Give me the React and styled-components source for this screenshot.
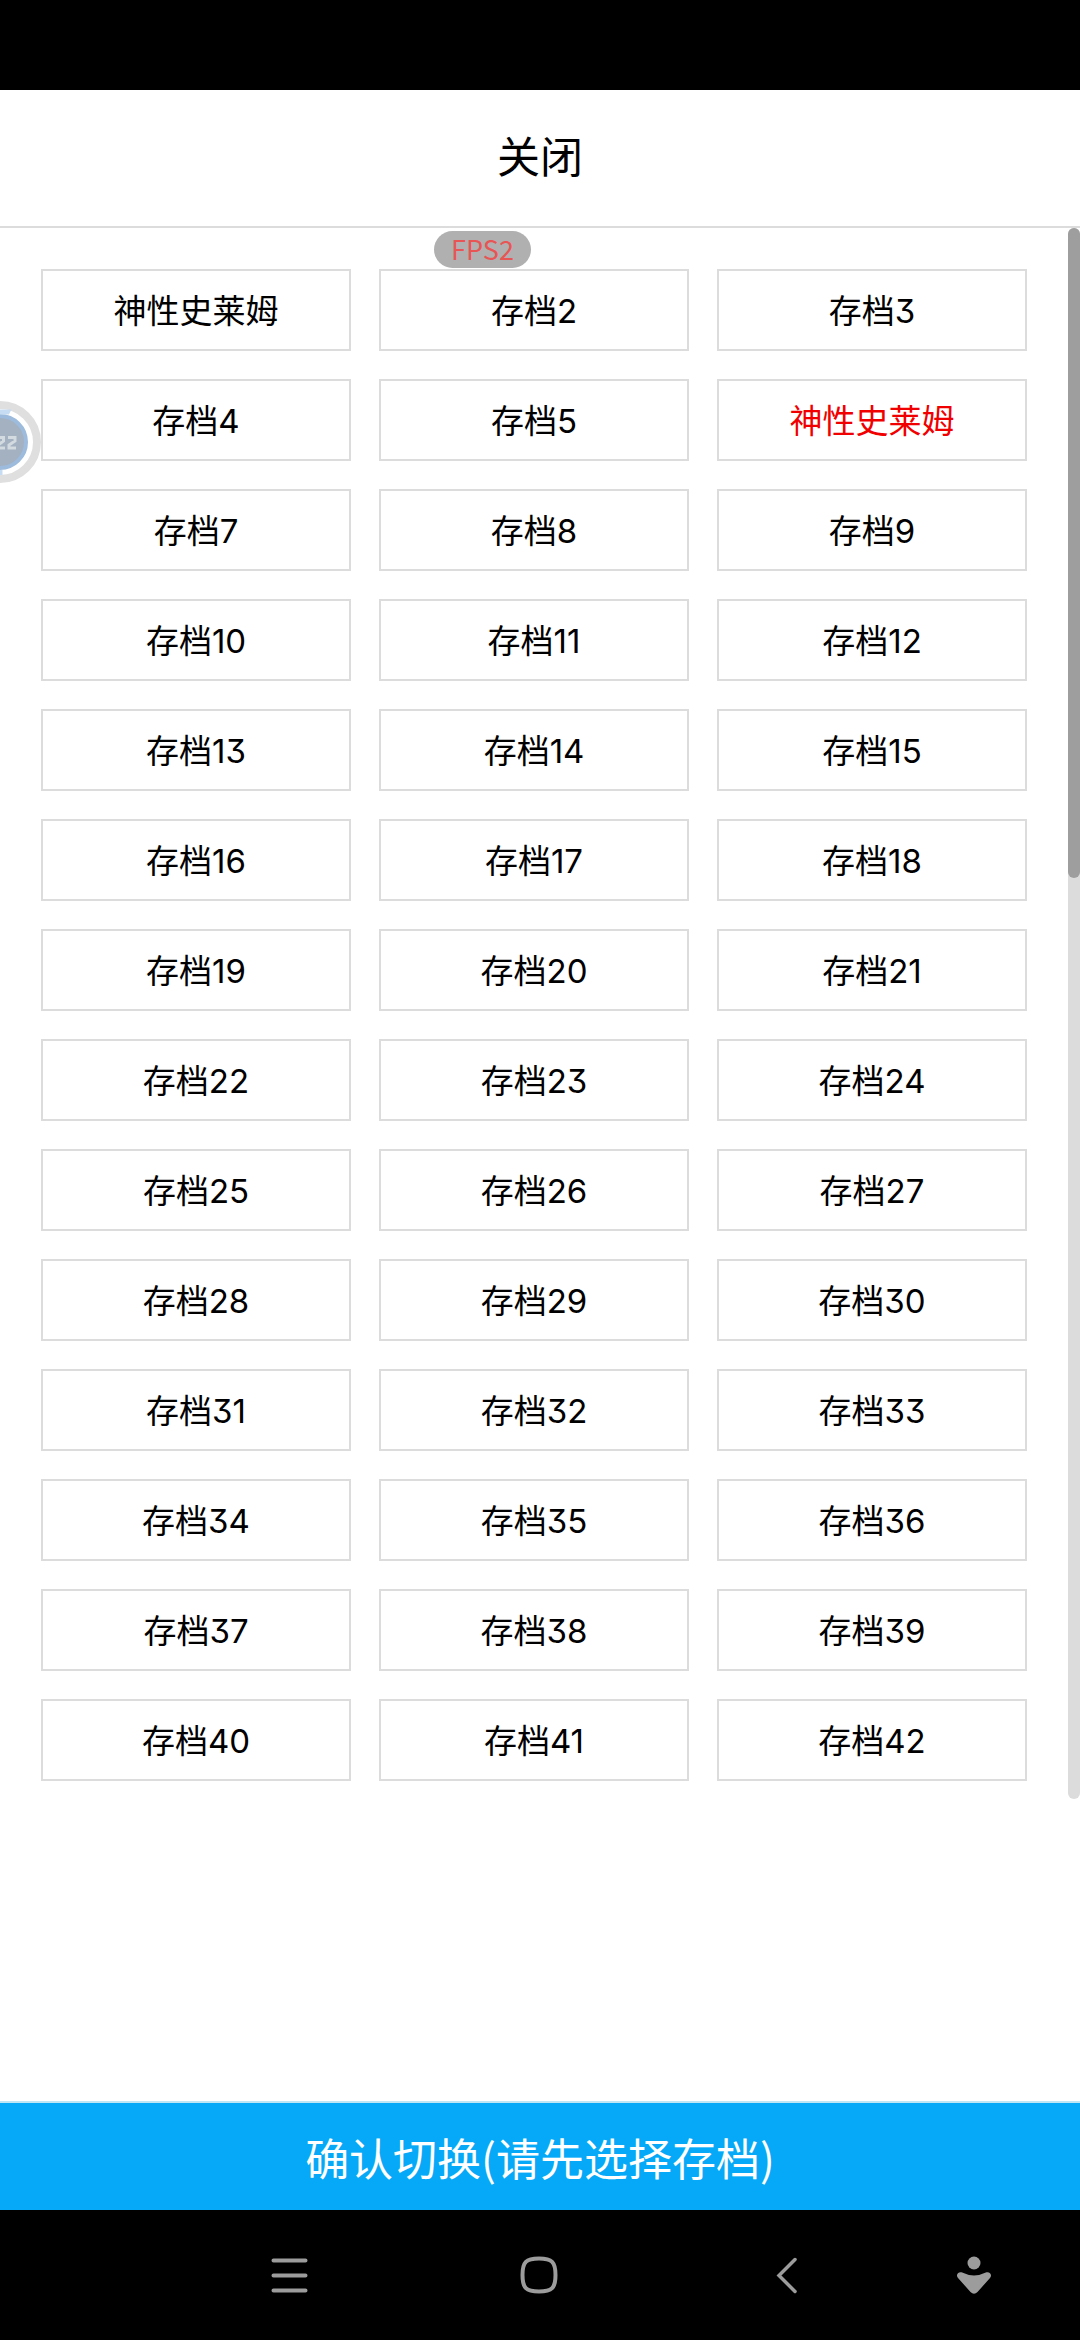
import React, { useState } from 'react';
import styled, { createGlobalStyle } from 'styled-components';

const GlobalStyle = createGlobalStyle`
  * {
    box-sizing: border-box;
  }

  body {
    margin: 0;
    background: #fff;
    font-family: Inter, 'Noto Sans CJK SC', sans-serif;
    font-weight: 380;
    font-feature-settings: 'cv09';
  }

  button {
    margin: 0;
    padding: 0;
    border: none;
    background: none;
    color: inherit;
    font: inherit;
    font-feature-settings: inherit;
    cursor: pointer;
  }
`;

const Screen = styled.div`
  position: relative;
  display: flex;
  flex-direction: column;
  min-height: 100vh;
  background: #fff;
  color: #000;
`;

const StatusBar = styled.div`
  height: 90px;
  background: #000;
`;

const CloseButton = styled.button`
  height: 138px;
  padding-bottom: 2px;
  border-bottom: 2px solid #dcdcdc;
  font-size: 43px;
  line-height: 60px;
`;

const ListArea = styled.main`
  display: flex;
  align-items: stretch;
`;

const SlotGrid = styled.div`
  flex: 1;
  display: grid;
  grid-template-columns: repeat(3, 1fr);
  gap: 28px;
  padding: 41px 41px 18px;
`;

const Slot = styled.button`
  height: 82px;
  padding-top: 2px;
  border: 2px solid #dcdcdc;
  font-size: 33px;
  line-height: 48px;
  color: ${({ $active }) => ($active ? '#f00000' : '#000')};
`;

const ScrollTrack = styled.div`
  width: 12px;
  border-radius: 6px;
  background: #dcdcdc;
`;

const ScrollThumb = styled.div`
  height: 650px;
  border-radius: 6px;
  background: #9e9e9e;
`;

const ConfirmButton = styled.button`
  height: 109px;
  margin-top: auto;
  border-top: 2px solid #bfe6f5;
  background: #05a9f7;
  color: #fff;
  font-family: 'Noto Sans CJK SC', sans-serif;
  font-size: 44px;
  font-weight: 400;
  line-height: 60px;
`;

const NavBar = styled.nav`
  display: grid;
  grid-template-columns: 2fr 2fr 2fr 1fr;
  height: 130px;
  padding: 0 44px 0 166px;
  background: #000;
  color: #9c9c9c;
`;

const NavButton = styled.button`
  display: flex;
  align-items: center;
  justify-content: center;
`;

const FpsBadge = styled.div`
  position: absolute;
  top: 231px;
  left: 434px;
  width: 97px;
  height: 37px;
  border-radius: 19px;
  background: #b0b0b0;
  color: #e85555;
  font-family: 'Noto Sans CJK SC', sans-serif;
  font-size: 27px;
  line-height: 36px;
  text-align: center;
`;

const FloatingBall = styled.button`
  position: absolute;
  top: 401px;
  left: 0;
  height: 82px;

  svg {
    display: block;
  }
`;

const SLOT_COUNT = 42;
const slotNames = { 1: '神性史莱姆', 6: '神性史莱姆' };

const slots = Array.from({ length: SLOT_COUNT }, (_, i) => ({
  id: i + 1,
  name: slotNames[i + 1] || `存档${i + 1}`,
}));

const MenuIcon = () => (
  <svg width="40" height="40" fill="none" stroke="currentColor" strokeWidth="4" strokeLinecap="round">
    <path d="M3.500 5.500H35.500M3.500 20.500H35.500M3.500 35.500H35.500" />
  </svg>
);

const HomeIcon = () => (
  <svg width="40" height="40" fill="none" stroke="currentColor" strokeWidth="4">
    <path d="M20 3.500C33 3.500 36.500 7 36.500 20S33 36.500 20 36.500 3.500 33 3.500 20 7 3.500 20 3.500Z" />
  </svg>
);

const BackIcon = () => (
  <svg width="40" height="40" fill="none" stroke="currentColor" strokeWidth="3.500" strokeLinecap="round">
    <path d="M28 4.500L12 20.500L28 36.500" />
  </svg>
);

const PersonIcon = () => (
  <svg width="40" height="40" fill="currentColor">
    <circle cx="20" cy="8" r="6.500" />
    <path d="M7.500 17.300Q20 23.500 32.500 17.300C36 16.500 38.500 20 36 23L23.500 37Q20 40.500 16.500 37L4 23C1.500 20 4 16.500 7.500 17.300Z" />
  </svg>
);

const BallIcon = () => (
  <svg width="42" height="82" viewBox="0 0 42 82">
    <circle cx="0" cy="41" r="37" fill="#fff" stroke="#dfdfdf" strokeWidth="8" />
    <circle cx="0" cy="41" r="26" fill="#a3b1c1" stroke="#9dbbdc" strokeWidth="4" />
    <path d="M0 10H9L8 12H0" fill="none" stroke="#c5dcf2" strokeWidth="3" />
    <path d="M1 69V74" stroke="#c5dcf2" strokeWidth="3" />
    <path d="M-3 36.500H3.500V40L-2 44V47H5M8 36.500H15V40L9 44V47H16" fill="none" stroke="#d3dae0" strokeWidth="3" />
  </svg>
);

const App = () => {
  const [selected, setSelected] = useState(6);

  return (
    <>
      <GlobalStyle />
      <Screen>
        <StatusBar />
        <CloseButton type="button">关闭</CloseButton>
        <ListArea>
          <SlotGrid>
            {slots.map(({ id, name }) => (
              <Slot key={id} type="button" $active={id === selected} onClick={() => setSelected(id)}>
                {name}
              </Slot>
            ))}
          </SlotGrid>
          <ScrollTrack>
            <ScrollThumb />
          </ScrollTrack>
        </ListArea>
        <ConfirmButton type="button">确认切换(请先选择存档)</ConfirmButton>
        <NavBar>
          <NavButton type="button" aria-label="菜单"><MenuIcon /></NavButton>
          <NavButton type="button" aria-label="主页"><HomeIcon /></NavButton>
          <NavButton type="button" aria-label="返回"><BackIcon /></NavButton>
          <NavButton type="button" aria-label="助手"><PersonIcon /></NavButton>
        </NavBar>
        <FpsBadge>FPS2</FpsBadge>
        <FloatingBall type="button" aria-label="悬浮球"><BallIcon /></FloatingBall>
      </Screen>
    </>
  );
};

export default App;
